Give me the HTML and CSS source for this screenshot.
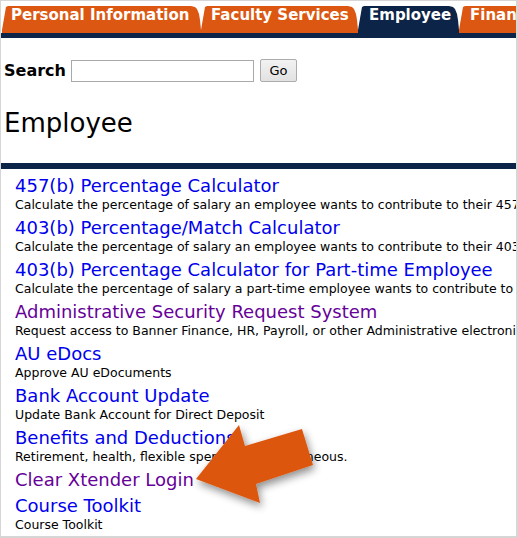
FILE: index.html
```html
<!DOCTYPE html>
<html lang="en">
<head>
<meta charset="utf-8">
<title>Employee</title>
<link rel="stylesheet" href="styles.css">
</head>
<body>
<div class="frame">
  <nav class="tabs">
    <a class="tab tab-personal" href="#">Personal Information</a>
    <a class="tab tab-faculty" href="#">Faculty Services</a>
    <a class="tab tab-employee is-active" href="#">Employee</a>
    <a class="tab tab-finance" href="#">Finance</a>
  </nav>
  <div class="tabs-bar"></div>

  <form class="search">
    <label class="search-label" for="q">Search</label>
    <input class="search-input" id="q" type="text">
    <button class="search-btn" type="button">Go</button>
  </form>

  <h1 class="title">Employee</h1>
  <div class="rule"></div>

  <ul class="menu">
    <li class="item"><a class="link" href="#">457(b) Percentage Calculator</a><div class="desc">Calculate the percentage of salary an employee wants to contribute to their 457(b) plan.</div></li>
    <li class="item"><a class="link" href="#">403(b) Percentage/Match Calculator</a><div class="desc">Calculate the percentage of salary an employee wants to contribute to their 403(b) plan with match.</div></li>
    <li class="item"><a class="link" href="#">403(b) Percentage Calculator for Part-time Employee</a><div class="desc">Calculate the percentage of salary a part-time employee wants to contribute to their 403(b) plan.</div></li>
    <li class="item"><a class="link visited" href="#">Administrative Security Request System</a><div class="desc">Request access to Banner Finance, HR, Payroll, or other Administrative electronic systems.</div></li>
    <li class="item"><a class="link" href="#">AU eDocs</a><div class="desc">Approve AU eDocuments</div></li>
    <li class="item"><a class="link" href="#">Bank Account Update</a><div class="desc">Update Bank Account for Direct Deposit</div></li>
    <li class="item"><a class="link" href="#">Benefits and Deductions</a><div class="desc">Retirement, health, flexible spending, miscellaneous.</div></li>
    <li class="item"><a class="link visited" href="#">Clear Xtender Login</a></li>
    <li class="item"><a class="link" href="#">Course Toolkit</a><div class="desc">Course Toolkit</div></li>
  </ul>

  <svg class="arrow" width="518" height="538" viewBox="0 0 518 538" aria-hidden="true">
    <defs>
      <filter id="sh" x="-20%" y="-20%" width="140%" height="140%">
        <feGaussianBlur in="SourceAlpha" stdDeviation="4"/>
        <feOffset dx="2" dy="4" result="b"/>
        <feComponentTransfer><feFuncA type="linear" slope="0.45"/></feComponentTransfer>
        <feMerge><feMergeNode/><feMergeNode in="SourceGraphic"/></feMerge>
      </filter>
    </defs>
    <polygon filter="url(#sh)" fill="#dc5711" points="196,479 239,425 245,446 302,429 313,465 256,484 260,503"/>
  </svg>
</div>
</body>
</html>
```

FILE: styles.css
```css
* { box-sizing: border-box; }

html, body {
  margin: 0;
  padding: 0;
  background: #fff;
}

body {
  font-family: "DejaVu Sans", Verdana, sans-serif;
  color: #000;
}

.frame {
  position: relative;
  width: 518px;
  height: 538px;
  border-style: solid;
  border-color: #d6d6d6;
  border-width: 1px 2px 2px 1px;
  overflow: hidden;
}

/* Tabs */
.tabs {
  display: flex;
  margin-top: 5px;
  padding-left: 1px;
  height: 27px;
  white-space: nowrap;
}

.tab {
  flex: none;
  display: block;
  height: 27px;
  padding-left: 9px;
  background: #dc5711;
  color: #fff;
  font-weight: bold;
  font-size: 15px;
  line-height: 18px;
  text-decoration: none;
  clip-path: polygon(0 100%, 0 calc(100% - 3px), 4px 1px, 6px 0, calc(100% - 10px) 0, calc(100% - 6px) 1px, calc(100% - 4px) 3px, calc(100% - 2px) 8px, calc(100% - 1px) 14px, 100% calc(100% - 3px), 100% 100%);
}

.tab.is-active { background: #0c2448; }

.tab-personal { width: 199px; }
.tab-faculty { width: 157px; padding-left: 10px; }
.tab-employee { width: 101px; padding-left: 11px; }
.tab-finance { width: 120px; padding-left: 11px; }

.tabs-bar {
  height: 5px;
  background: #0c2448;
}

/* Search */
.search {
  display: flex;
  align-items: center;
  margin: 21px 0 0 3px;
  height: 23px;
}

.search-label {
  font-weight: bold;
  font-size: 16px;
  margin-right: 5px;
}

.search-input {
  width: 183px;
  height: 22px;
  border: 1px solid #a9a9a9;
  margin: 0 6px 0 0;
  padding: 0 2px;
  font: inherit;
}

.search-btn {
  width: 37px;
  height: 23px;
  margin: 0;
  padding: 0;
  border: 1px solid #acacac;
  border-radius: 2px;
  background: linear-gradient(#f2f2f2, #e2e2e2);
  font-family: "DejaVu Sans", sans-serif;
  font-size: 13px;
  color: #000;
}

/* Heading */
.title {
  margin: 26px 0 0 3px;
  font-size: 26px;
  font-weight: normal;
  line-height: 30px;
}

.rule {
  margin-top: 25px;
  height: 6px;
  background: #0c2448;
}

/* Menu */
.menu {
  list-style: none;
  margin: 0;
  padding: 2px 0 0 14px;
  white-space: nowrap;
}

.link {
  display: block;
  margin-top: 4px;
  font-size: 18px;
  line-height: 22px;
  color: #0000ee;
  text-decoration: none;
}

.link.visited { color: #660099; }

.desc {
  font-size: 12.5px;
  line-height: 16px;
}

/* Annotation arrow */
.arrow {
  position: absolute;
  left: -1px;
  top: -1px;
  pointer-events: none;
}
```
